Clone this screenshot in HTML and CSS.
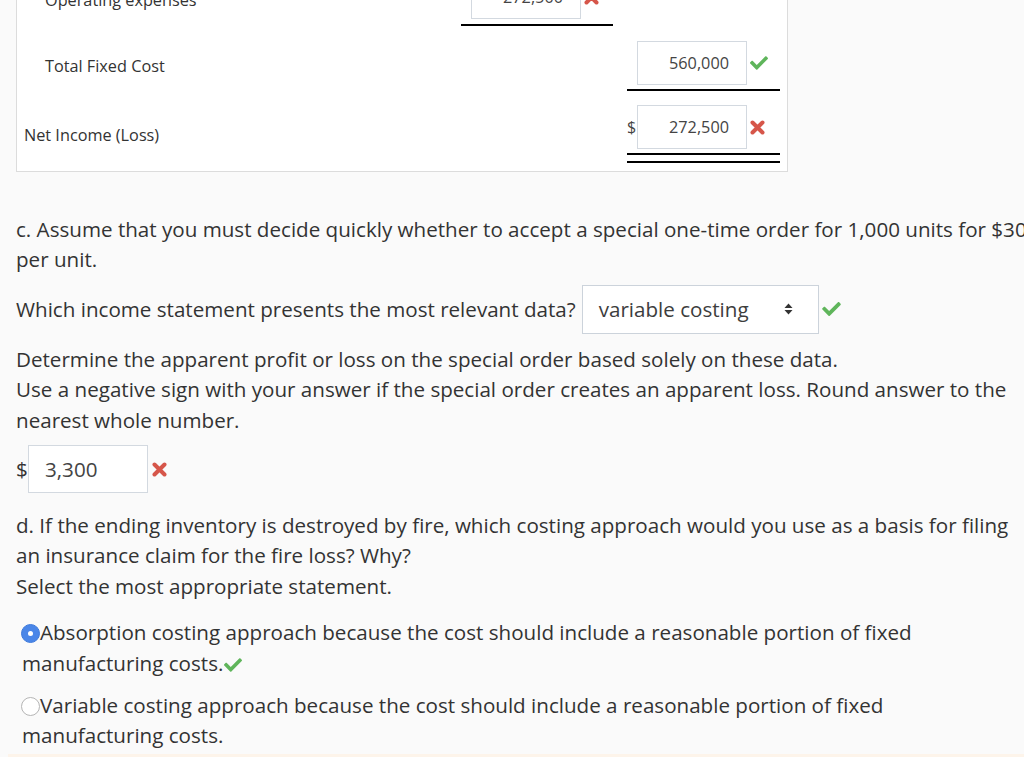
FILE: index.html
```html
<!DOCTYPE html>
<html>
<head>
<meta charset="utf-8">
<link rel="stylesheet" href="styles.css">
</head>
<body>
<div class="page">
  <div class="statement">
    <div class="srow">
      <div class="label indent lbl-a">Operating expenses</div>
      <div class="cell">
        <div class="field"><span class="cur"></span><span class="amount">272,500</span><span class="mark"><svg class="ico-x" viewBox="0 0 15 15"><path d="M2.5 2.5L12.5 12.5M12.5 2.5L2.5 12.5"/></svg></span></div>
        <div class="rule rule-first"></div>
      </div>
      <div class="cell"></div>
    </div>
    <div class="srow">
      <div class="label indent lbl-a">Total Fixed Cost</div>
      <div class="cell"></div>
      <div class="cell">
        <div class="field"><span class="cur"></span><span class="amount">560,000</span><span class="mark"><svg class="ico-check" viewBox="0 64 512 384"><path d="M173.898 439.404l-166.4-166.4c-9.997-9.997-9.997-26.206 0-36.204l36.203-36.204c9.997-9.998 26.207-9.998 36.204 0L192 312.69 432.095 72.596c9.997-9.997 26.207-9.997 36.204 0l36.203 36.204c9.997 9.997 9.997 26.206 0 36.204l-294.4 294.401c-9.998 9.997-26.207 9.997-36.204-.001z"/></svg></span></div>
        <div class="rule"></div>
      </div>
    </div>
    <div class="srow srow-last">
      <div class="label lbl-b">Net Income (Loss)</div>
      <div class="cell"></div>
      <div class="cell cell-b">
        <div class="field"><span class="cur">$</span><span class="amount">272,500</span><span class="mark"><svg class="ico-x" viewBox="0 0 15 15"><path d="M2.5 2.5L12.5 12.5M12.5 2.5L2.5 12.5"/></svg></span></div>
        <div class="rule-double"></div>
      </div>
    </div>
  </div>

  <p class="para para-c">c. Assume that you must decide quickly whether to accept a special one-time order for 1,000 units for $30 per unit.</p>

  <div class="select-row">
    <span>Which income statement presents the most relevant data?</span>
    <span class="select"><span class="select-text">variable costing</span><svg class="sort" viewBox="0 0 9 14"><path d="M0.5 6L4.5 1.5L8.5 6Z"/><path d="M0.5 8L4.5 12.5L8.5 8Z"/></svg></span>
    <span class="mark mark-lg"><svg class="ico-check" viewBox="0 64 512 384"><path d="M173.898 439.404l-166.4-166.4c-9.997-9.997-9.997-26.206 0-36.204l36.203-36.204c9.997-9.998 26.207-9.998 36.204 0L192 312.69 432.095 72.596c9.997-9.997 26.207-9.997 36.204 0l36.203 36.204c9.997 9.997 9.997 26.206 0 36.204l-294.4 294.401c-9.998 9.997-26.207 9.997-36.204-.001z"/></svg></span>
  </div>

  <p class="para para-det">Determine the apparent profit or loss on the special order based solely on these data.<br>Use a negative sign with your answer if the special order creates an apparent loss. Round answer to the nearest whole number.</p>

  <div class="answer-row">
    <span class="dollar">$</span>
    <span class="answer">3,300</span>
    <span class="mark mark-x"><svg class="ico-x" viewBox="0 0 15 15"><path d="M2.5 2.5L12.5 12.5M12.5 2.5L2.5 12.5"/></svg></span>
  </div>

  <p class="para para-d">d. If the ending inventory is destroyed by fire, which costing approach would you use as a basis for filing an insurance claim for the fire loss? Why?<br>Select the most appropriate statement.</p>

  <div class="options">
    <p class="option option-1"><span class="radio radio-on"></span>Absorption costing approach because the cost should include a reasonable portion of fixed manufacturing costs.<span class="mark mark-inline"><svg class="ico-check" viewBox="0 64 512 384"><path d="M173.898 439.404l-166.4-166.4c-9.997-9.997-9.997-26.206 0-36.204l36.203-36.204c9.997-9.998 26.207-9.998 36.204 0L192 312.69 432.095 72.596c9.997-9.997 26.207-9.997 36.204 0l36.203 36.204c9.997 9.997 9.997 26.206 0 36.204l-294.4 294.401c-9.998 9.997-26.207 9.997-36.204-.001z"/></svg></span></p>
    <p class="option option-2"><span class="radio"></span>Variable costing approach because the cost should include a reasonable portion of fixed manufacturing costs.</p>
  </div>

  <div class="feedback"></div>
</div>
</body>
</html>
```

FILE: styles.css
```css
html, body {
  margin: 0;
  padding: 0;
  background: #fafafa;
  overflow: hidden;
}

body {
  font-family: "Open Sans", "Liberation Sans", sans-serif;
  color: #333;
  width: 1024px;
  height: 757px;
}

.page {
  padding-left: 16px;
  width: 1016px;
}

/* statement table */
.statement {
  margin-top: -41px;
  background: #fff;
  border: 1px solid #dcdcdc;
  padding: 0 7px 8px 7px;
  width: 756px;
}

.srow {
  display: grid;
  grid-template-columns: 1fr 152px 153px;
  column-gap: 14px;
}

.label {
  font-size: 16.25px;
  line-height: 20px;
  color: #333;
}

.indent {
  padding-left: 21px;
}

.lbl-a { padding-top: 30px; }
.lbl-b { padding-top: 34px; }

.cell {
  padding-top: 15px;
}

.cell-b {
  padding-top: 14px;
}

.field {
  display: flex;
  align-items: center;
  height: 44px;
}

.cur {
  width: 10px;
  font-size: 16px;
  color: #444;
  line-height: 20px;
}

.amount {
  box-sizing: border-box;
  width: 110px;
  height: 44px;
  background: #fff;
  border: 1px solid #d3d9e0;
  text-align: right;
  padding-right: 17px;
  font-size: 16.25px;
  line-height: 42px;
  color: #444;
}

.mark {
  display: inline-flex;
  align-items: center;
  margin-left: 3px;
}

.ico-check {
  width: 18px;
  height: 14px;
  fill: #5fb55b;
}

.ico-x {
  width: 15px;
  height: 15px;
  fill: none;
  stroke: #d6564a;
  stroke-width: 4;
  stroke-linecap: round;
}

.rule {
  margin-top: 4px;
  height: 0;
  border-top: 2px solid #000;
}

.rule-first {
  margin-top: 5px;
}

.rule-double {
  margin-top: 4px;
  height: 6px;
  border-top: 2px solid #000;
  border-bottom: 2px solid #000;
}

/* paragraphs */
.para {
  margin: 0;
  font-size: 20.6px;
  line-height: 30.4px;
  color: #333;
}

.para-c { margin-top: 42px; }
.para-det { margin-top: 10px; }
.para-d { margin-top: 17px; }

.select-row {
  margin-top: 10px;
  display: flex;
  align-items: center;
  font-size: 20.6px;
  line-height: 30px;
}

.select {
  margin-left: 6px;
  box-sizing: border-box;
  width: 237px;
  height: 49px;
  background: #fff;
  border: 1px solid #ccd3db;
  display: flex;
  align-items: center;
  justify-content: space-between;
  padding: 0 25px 0 16px;
  color: #3d3d3d;
}

.sort {
  width: 9px;
  height: 14px;
  fill: #333;
}

.mark-lg {
  margin-left: 3px;
}

.mark-lg .ico-check {
  width: 19px;
  height: 14px;
}

.answer-row {
  margin-top: 10px;
  display: flex;
  align-items: center;
  font-size: 20.6px;
}

.dollar {
  width: 12px;
  color: #333;
}

.answer {
  box-sizing: border-box;
  width: 120px;
  height: 48px;
  background: #fff;
  border: 1px solid #d3d9e0;
  padding-left: 16px;
  line-height: 46px;
  color: #444;
}

.mark-x {
  margin-left: 4px;
}

/* options */
.options {
  padding-left: 6px;
  margin-right: 14px;
}

.option {
  margin: 0;
  font-size: 20.6px;
  line-height: 30.4px;
  color: #333;
}

.option-1 { margin-top: 16px; }
.option-2 { margin-top: 12px; }

.radio {
  display: inline-block;
  box-sizing: border-box;
  width: 19px;
  height: 19px;
  border-radius: 50%;
  border: 1px solid #b5b5b5;
  background: #fff;
  vertical-align: -3px;
  margin-left: -1px;
}

.radio-on {
  background: #4a86e8;
  border: 1px solid #3f7bdc;
  position: relative;
}

.radio-on::after {
  content: "";
  position: absolute;
  left: 6px;
  top: 6px;
  width: 5px;
  height: 5px;
  border-radius: 50%;
  background: #fff;
}

.mark-inline {
  margin-left: 1px;
  vertical-align: -1px;
}

.feedback {
  margin-top: 3px;
  margin-left: -8px;
  height: 20px;
  background: #fdf4ea;
}
```
